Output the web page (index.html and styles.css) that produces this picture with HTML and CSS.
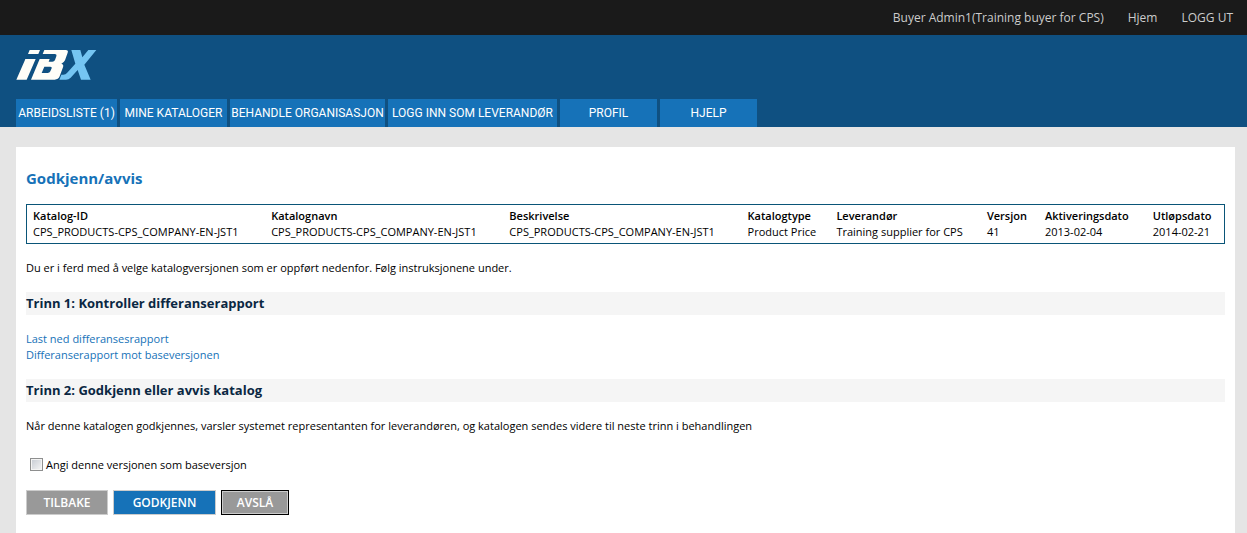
FILE: index.html
```html
<!DOCTYPE html>
<html lang="no">
<head>
<meta charset="utf-8">
<title>Godkjenn/avvis</title>
<link rel="stylesheet" href="styles.css">
</head>
<body>
<div class="topbar">
  <span>Buyer Admin1(Training buyer for CPS)</span>
  <a href="#">Hjem</a>
  <a href="#">LOGG UT</a>
</div>
<header class="header">
  <svg class="logo" viewBox="48 60 243 90" role="img" aria-label="iBX">
    <path fill="#fffef8" d="M89 60H120L115 72H84ZM76 87H107L80 149H49L70 101Q75 91 76 87Z"/>
    <path fill="#fffef8" fill-rule="evenodd" d="M133 60H197Q206 60 203 68L195 91Q191 99 184 101Q192 103 189 112L179 139Q175 149 164 149H93L119 87H149L146 95H157Q163 95 165 90L169 79Q171 72 164 72H128ZM133 110L125 129H143Q149 129 151 124L155 115Q157 110 151 110Z"/>
    <path fill="#75c5f2" d="M214 60H241L247 82L265 60H289L253 104L272 149H243L233 120L212 143Q206 149 198 149H178L184 134H190Q197 134 201 129L226 101Z"/>
  </svg>
  <nav class="tabs">
    <a href="#">ARBEIDSLISTE (1)</a>
    <a href="#">MINE KATALOGER</a>
    <a href="#">BEHANDLE ORGANISASJON</a>
    <a href="#">LOGG INN SOM LEVERANDØR</a>
    <a href="#">PROFIL</a>
    <a href="#">HJELP</a>
  </nav>
</header>
<main class="panel">
  <h1>Godkjenn/avvis</h1>
  <div class="catalog">
    <table>
      <thead>
        <tr><th class="wide">Katalog-ID</th><th class="wide">Katalognavn</th><th class="wide">Beskrivelse</th><th class="type">Katalogtype</th><th class="supplier">Leverandør</th><th class="version">Versjon</th><th class="date">Aktiveringsdato</th><th>Utløpsdato</th></tr>
      </thead>
      <tbody>
        <tr><td>CPS_PRODUCTS-CPS_COMPANY-EN-JST1</td><td>CPS_PRODUCTS-CPS_COMPANY-EN-JST1</td><td>CPS_PRODUCTS-CPS_COMPANY-EN-JST1</td><td>Product Price</td><td>Training supplier for CPS</td><td>41</td><td>2013-02-04</td><td>2014-02-21</td></tr>
      </tbody>
    </table>
  </div>
  <p>Du er i ferd med å velge katalogversjonen som er oppført nedenfor. Følg instruksjonene under.</p>
  <h2>Trinn 1: Kontroller differanserapport</h2>
  <ul class="links">
    <li><a href="#">Last ned differansesrapport</a></li>
    <li><a href="#">Differanserapport mot baseversjonen</a></li>
  </ul>
  <h2>Trinn 2: Godkjenn eller avvis katalog</h2>
  <p>Når denne katalogen godkjennes, varsler systemet representanten for leverandøren, og katalogen sendes videre til neste trinn i behandlingen</p>
  <form>
    <div class="check">
      <input type="checkbox" id="base">
      <label for="base">Angi denne versjonen som baseversjon</label>
    </div>
    <div class="buttons">
      <button type="button">TILBAKE</button>
      <button type="button" class="primary">GODKJENN</button>
      <button type="button" class="focused">AVSLÅ</button>
    </div>
  </form>
</main>
</body>
</html>
```
FILE: styles.css
```css
* { box-sizing: border-box; }
body {
  margin: 0;
  background: #e5e5e5;
  color: #000;
  font: 11px/16px "Trebuchet MS", "Open Sans", sans-serif;
}
a { color: inherit; text-decoration: none; }
.topbar {
  display: flex;
  justify-content: flex-end;
  gap: 24px;
  padding: 10px 14px 9px;
  background: #1a1a1a;
  color: #ccc;
  font-size: 12px;
}
.header {
  padding: 15px 16px 0;
  background: #0f5081;
}
.logo { display: block; width: 81px; height: 30px; }
.tabs {
  display: grid;
  grid-template-columns: 101px 107px 155px 169px 97px 97px;
  gap: 3px;
  margin-top: 19px;
}
.tabs a {
  padding: 6px 0;
  background: #1672b8;
  color: #fff;
  font-family: "Trebuchet MS", Roboto, sans-serif;
  font-size: 12px;
  text-align: center;
  white-space: nowrap;
}
.panel {
  margin: 20px 12px 0 16px;
  padding: 20px 10px;
  min-height: calc(100vh - 147px);
  background: #fff;
}
h1 {
  margin: 0 0 15px;
  color: #1672b8;
  font-size: 15px;
  line-height: 22px;
  font-weight: 700;
}
.catalog { border: 1px solid #0a5578; padding: 3px 6px; }
table { width: 100%; border-collapse: collapse; table-layout: fixed; }
th, td { padding: 0; text-align: left; white-space: nowrap; }
th { font-weight: 600; }
.wide { width: 20.1%; }
.type { width: 7.5%; }
.supplier { width: 12.7%; }
.version { width: 4.9%; }
.date { width: 9.1%; }
p { margin: 16px 0; }
h2 {
  margin: 0 0 16px;
  background: #f5f5f5;
  color: #0a2742;
  font-size: 13px;
  line-height: 23px;
  font-weight: 700;
}
.links { margin: 0 0 16px; padding: 0; list-style: none; color: #1672b8; }
.check { display: flex; align-items: center; margin: 23px 0 17px; padding-left: 4px; }
.check input {
  appearance: none;
  width: 13px;
  height: 13px;
  margin: 0 3px 2px 0;
  border: 1px solid #8e8f8f;
  background: linear-gradient(135deg, #c5cad2, #f6f6f6);
  box-shadow: inset 0 0 0 1px #f4f4f4;
}
.buttons { display: flex; gap: 5px; }
button {
  min-width: 82px;
  height: 25px;
  padding: 0 16px;
  border: 1px solid #ccc;
  background: #999;
  color: #fff;
  font: 600 12px/16px "Trebuchet MS", "Open Sans", sans-serif;
}
.primary { min-width: 103px; background: #1672b8; }
.focused {
  min-width: 68px;
  padding: 0 14px;
  border-color: #000;
  box-shadow: inset 0 0 0 1px #ccc;
}
```
